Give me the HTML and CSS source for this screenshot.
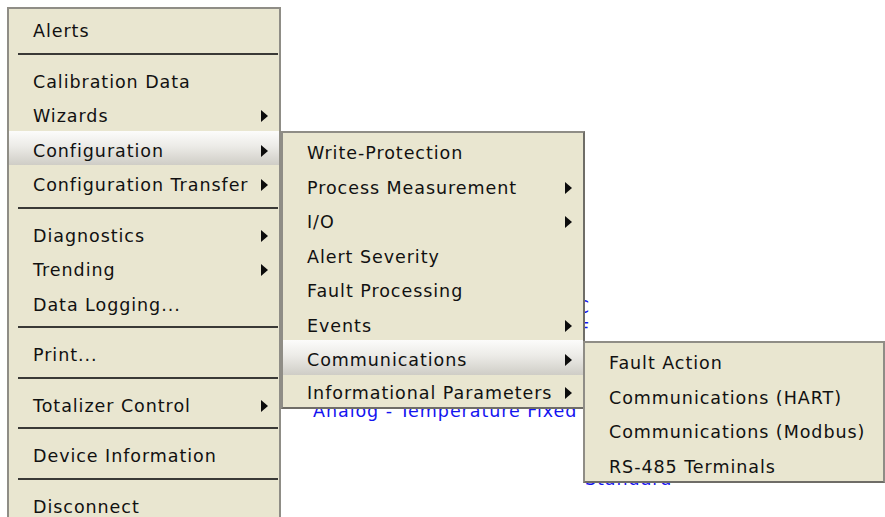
FILE: index.html
```html
<!DOCTYPE html>
<html lang="en">

<head>
    <meta charset="UTF-8">
    <meta name="viewport" content="width=device-width, initial-scale=1.0">
    <title>Device Menu</title>
    <link rel="stylesheet" href="styles.css">
</head>

<body>
    <main class="page">
        <ul class="links">
            <li class="edge"><a href="#">C</a></li>
            <li class="edge"><a href="#">F</a></li>
            <li class="tree-row"><a href="#">Analog - Temperature Fixed Value</a></li>
        </ul>
        <p class="note"><a href="#">Standard</a></p>
    </main>

    <!-- context menu -->
    <ul class="menu menu-main">
        <li class="item">Alerts</li>
        <li class="sep"></li>
        <li class="item">Calibration Data</li>
        <li class="item">Wizards <span class="arrow"></span></li>
        <li class="item active">Configuration <span class="arrow"></span></li>
        <li class="item">Configuration Transfer <span class="arrow"></span></li>
        <li class="sep"></li>
        <li class="item">Diagnostics <span class="arrow"></span></li>
        <li class="item">Trending <span class="arrow"></span></li>
        <li class="item">Data Logging...</li>
        <li class="sep"></li>
        <li class="item">Print...</li>
        <li class="sep"></li>
        <li class="item">Totalizer Control <span class="arrow"></span></li>
        <li class="sep"></li>
        <li class="item">Device Information</li>
        <li class="sep"></li>
        <li class="item">Disconnect</li>
    </ul>

    <ul class="menu menu-config">
        <li class="item">Write-Protection</li>
        <li class="item">Process Measurement <span class="arrow"></span></li>
        <li class="item">I/O <span class="arrow"></span></li>
        <li class="item">Alert Severity</li>
        <li class="item">Fault Processing</li>
        <li class="item">Events <span class="arrow"></span></li>
        <li class="item active">Communications <span class="arrow"></span></li>
        <li class="item">Informational Parameters <span class="arrow"></span></li>
    </ul>

    <ul class="menu menu-comm">
        <li class="item">Fault Action</li>
        <li class="item">Communications (HART)</li>
        <li class="item">Communications (Modbus)</li>
        <li class="item">RS-485 Terminals</li>
    </ul>
</body>

</html>
```

FILE: styles.css
```css
/* General Reset */
* {
    margin: 0;
    padding: 0;
    box-sizing: border-box;
}

body {
    font-family: 'DejaVu Sans', Verdana, sans-serif;
    font-size: 17.5px;
    letter-spacing: 0.95px;
    background-color: #fff;
    color: #111;
    width: 885px;
    height: 517px;
    overflow: hidden;
    position: relative;
}

ul {
    list-style: none;
}

/* page behind the menus */
.page {
    padding-left: 313px;
}

.links {
    padding-top: 296px;
    width: 277px;
    overflow: hidden;
}

.links li {
    height: 22px;
    line-height: 22px;
    white-space: nowrap;
}

.links .edge {
    text-align: right;
}

.links .tree-row {
    margin-top: 60px;
}

.page a {
    color: #1414f0;
    text-decoration: none;
}

.note {
    margin-top: 46px;
    margin-left: 272px;
    line-height: 22px;
}

/* menus */
.menu {
    position: absolute;
    background-color: #e9e6d0;
    border: 2px solid #8f8d86;
    white-space: nowrap;
}

.menu-main {
    left: 7px;
    top: 7px;
    width: 274px;
    padding-top: 2px;
    z-index: 1;
}

.menu-config {
    left: 281px;
    top: 131px;
    width: 304px;
    border-right-color: #6f6d67;
    border-bottom-color: #6f6d67;
    z-index: 2;
}

.menu-comm {
    left: 583px;
    top: 341px;
    width: 302px;
    border-bottom-color: #6f6d67;
    z-index: 3;
}

.item {
    height: 34.5px;
    padding: 6px 11px 0 24px;
    display: flex;
    align-items: center;
    justify-content: space-between;
}

/* last row sits tight on the bottom edge */
.menu-config .item:last-child {
    height: 32px;
    padding-top: 4px;
}

.item.active {
    background: linear-gradient(#fcfcfb, #ecebe7 45%, #cfcdc6);
}

.arrow {
    flex-shrink: 0;
    width: 0;
    height: 0;
    border-left: 7px solid #0c0c0c;
    border-top: 6px solid transparent;
    border-bottom: 6px solid transparent;
}

.sep {
    height: 16px;
    padding-top: 7px;
    padding-left: 9px;
    padding-right: 1px;
}

.sep::before {
    content: "";
    display: block;
    height: 2px;
    background-color: #3a3936;
}
```
